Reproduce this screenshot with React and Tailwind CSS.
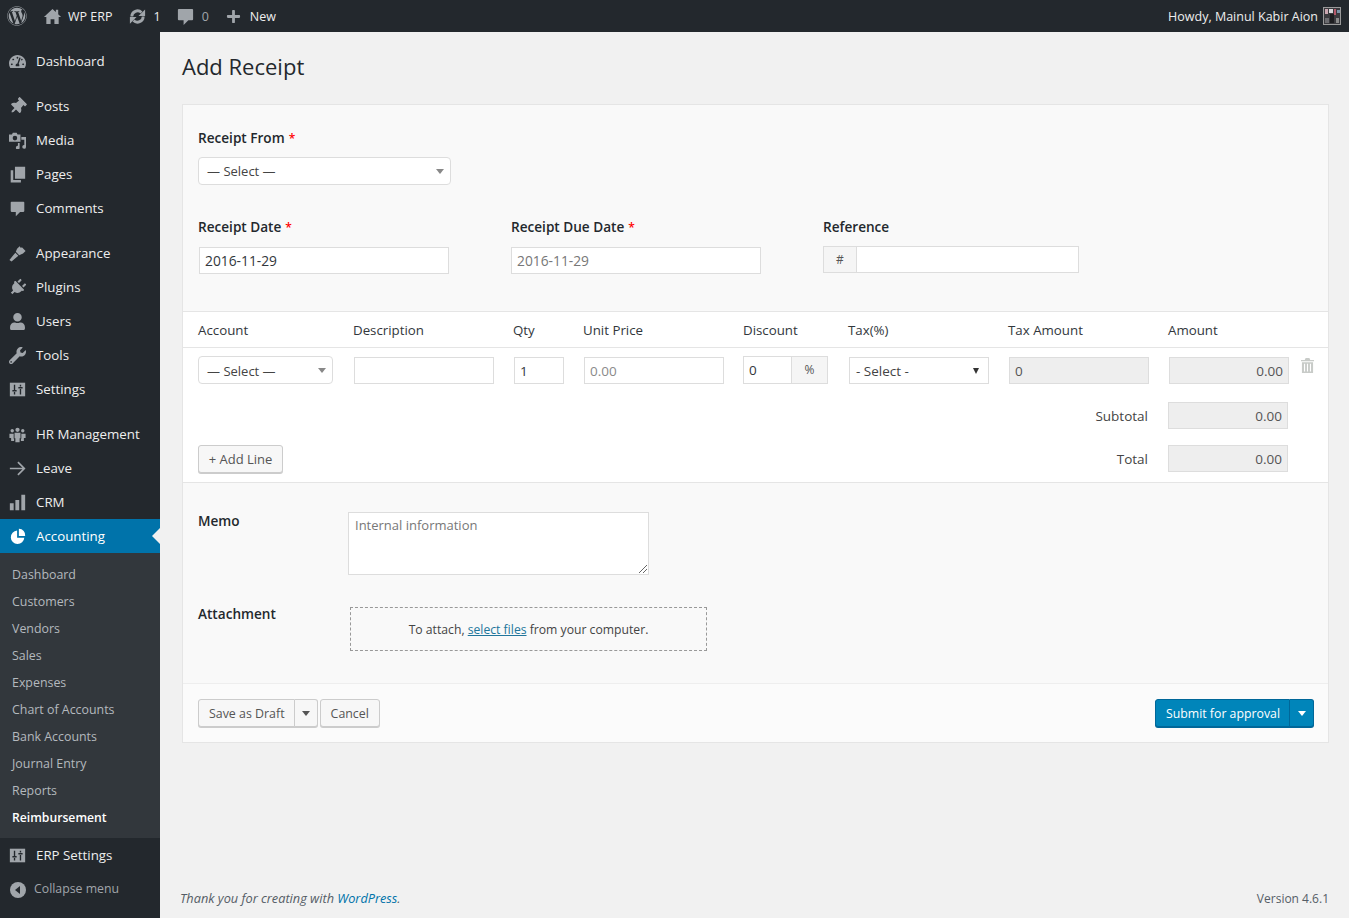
import { FaWordpress, FaPlus, FaThumbtack, FaUser, FaWrench, FaPlug, FaTachometerAlt } from 'react-icons/fa'

function Bubble({ className }) {
  return (
    <svg viewBox="0 0 20 20" className={className} fill="currentColor">
      <path d="M3 2h14c.6 0 1 .4 1 1v10c0 .6-.4 1-1 1h-4l-5 5v-5H3c-.6 0-1-.4-1-1V3c0-.6.4-1 1-1z" />
    </svg>
  )
}

function Home({ className }) {
  return (
    <svg viewBox="0 0 20 20" className={className} fill="currentColor">
      <path d="M10 2L1 10.500h2.500V18H8v-5h4v5h4.500v-7.500H19l-3-3V3h-2.500v2.200z" />
    </svg>
  )
}

function Update({ className }) {
  return (
    <svg viewBox="0 0 20 20" className={className}>
      <path d="M4 10a6 6 0 0 1 10.200-4.200M16 10a6 6 0 0 1-10.200 4.200" fill="none" stroke="currentColor" strokeWidth="3" />
      <path d="M18 2.500v7h-7zM2 17.500v-7h7z" fill="currentColor" />
    </svg>
  )
}

function Pin({ className }) {
  return <FaThumbtack className={className + ' rotate-45'} />
}

function Plug({ className }) {
  return <FaPlug className={className + ' rotate-45'} />
}

function Brush({ className }) {
  return (
    <svg viewBox="0 0 20 20" className={className} fill="currentColor">
      <path d="M0.500 17.500l7-8.500 3.500 3.500L3 19.500zM8 8L9.500 4.500 12.500 1.500 14 3.500l1.200-.8L19.500 7 16.500 10 12 12z" />
    </svg>
  )
}

function Media({ className }) {
  return (
    <svg viewBox="0 0 20 20" className={className} fill="currentColor">
      <path d="M0 3h3.500l1-2h4.500l1 2h3.500v8.500H0V3zm7 1.500a2.700 2.700 0 100 5.400 2.700 2.700 0 000-5.400z" fillRule="evenodd" />
      <path d="M20 6v11.500a2.200 2.200 0 11-2-2.200V9h-3.500V6h5.500zM12.500 13v5.500a2.200 2.200 0 11-2-2.200V13h2z" />
    </svg>
  )
}

function Pages({ className }) {
  return (
    <svg viewBox="0 0 20 20" className={className} fill="currentColor">
      <path d="M7 1h12v14H7zM2 5h3v11.500h9V19.500H2z" />
    </svg>
  )
}

function Sliders({ className }) {
  return (
    <svg viewBox="0 0 20 20" className={className}>
      <path fill="currentColor" d="M1 2h18v16H1z" />
      <path stroke="#23282d" strokeWidth="1.600" fill="none" d="M6.500 4.500v6M6.500 13v3M13.500 4.500v2M13.500 9.500v6.500M4 11.500h5M11 8h5" />
    </svg>
  )
}

function Groups({ className }) {
  return (
    <svg viewBox="0 0 20 20" className={className} fill="currentColor">
      <circle cx="10" cy="4.500" r="2.500" />
      <path d="M6.500 8h7v6.500h-1V19h-5v-4.500h-1z" />
      <circle cx="3.800" cy="5.500" r="2" />
      <circle cx="16.200" cy="5.500" r="2" />
      <path d="M0.500 9h5v6H6v2.500H2.500V14H0.500zM19.500 9h-5v6H14v2.500h3.500V14h2z" />
    </svg>
  )
}

function Arrow({ className }) {
  return (
    <svg viewBox="0 0 20 20" className={className} fill="none" stroke="currentColor" strokeWidth="2">
      <path d="M1 10h17M10.500 2.500L18 10l-7.500 7.500" />
    </svg>
  )
}

function Bars({ className }) {
  return (
    <svg viewBox="0 0 20 20" className={className} fill="currentColor">
      <path d="M1 11h4.500v8H1zM7.500 7H12v12H7.500zM14.500 1H19v18h-4.500z" />
    </svg>
  )
}

function Pie({ className }) {
  return (
    <svg viewBox="0 0 20 20" className={className} fill="currentColor">
      <path d="M9 4a7.500 7.500 0 1 0 8 8H9z" />
      <path d="M11 2a7 7 0 0 1 7 8h-7z" />
    </svg>
  )
}

function Trash({ className }) {
  return (
    <svg viewBox="0 0 14 16" className={className} fill="currentColor">
      <path d="M5 0h4l1 2h4v1.500H0V2h4L5 0z" />
      <path d="M1 4.500h12V16H1V4.500zm2.200 1.500v8.500h1.200V6H3.200zm3.200 0v8.500h1.200V6H6.400zm3.200 0v8.500h1.200V6H9.600z" fillRule="evenodd" />
    </svg>
  )
}

function Caret({ className }) {
  return <span className={'block h-0 w-0 border-x-4 border-t-[5px] border-x-transparent ' + className} />
}

const menuGroups = [
  [['Dashboard', FaTachometerAlt]],
  [['Posts', Pin], ['Media', Media], ['Pages', Pages], ['Comments', Bubble]],
  [['Appearance', Brush], ['Plugins', Plug], ['Users', FaUser], ['Tools', FaWrench], ['Settings', Sliders]],
  [['HR Management', Groups], ['Leave', Arrow], ['CRM', Bars]],
]

const subMenu = ['Dashboard', 'Customers', 'Vendors', 'Sales', 'Expenses', 'Chart of Accounts', 'Bank Accounts', 'Journal Entry', 'Reports']

function MenuItem({ label, Icon }) {
  return (
    <div className="flex h-[34px] items-center text-[13.300px] text-[#eeeeee]">
      <span className="flex w-9 shrink-0 justify-center pr-[1px] text-[#a0a5aa]">
        <Icon className="h-[17px] w-[17px]" />
      </span>
      <span className="pt-[2px]">{label}</span>
    </div>
  )
}

function Sidebar() {
  return (
    <aside className="flex w-40 shrink-0 flex-col bg-[#23282d] pt-3">
      {menuGroups.map((group, i) => (
        <div key={group[0][0]} className={i < 3 ? 'mb-[11px]' : ''}>
          {group.map(([label, Icon]) => (
            <MenuItem key={label} label={label} Icon={Icon} />
          ))}
        </div>
      ))}
      <div className="relative flex h-[34px] items-center bg-[#0073aa] text-[13.300px] text-white">
        <span className="flex w-9 shrink-0 justify-center pr-[1px]">
          <Pie className="h-[18px] w-[18px]" />
        </span>
        <span className="pt-[2px]">Accounting</span>
        <span className="absolute right-0 top-[9px] h-0 w-0 border-y-8 border-r-8 border-y-transparent border-r-[#f1f1f1]" />
      </div>
      <div className="bg-[#32373c] pb-[6px] pt-[9px] text-[12.400px] text-[#b4b9be]">
        {subMenu.map((s) => (
          <div key={s} className="flex h-[27px] items-center pl-3">{s}</div>
        ))}
        <div className="flex h-[27px] items-center pl-3 text-[12.200px] font-semibold text-white">Reimbursement</div>
      </div>
      <MenuItem label="ERP Settings" Icon={Sliders} />
      <div className="flex h-[34px] items-center pt-px text-[12.300px] text-[#a0a5aa]">
        <span className="ml-[10px] mr-2 flex h-4 w-4 items-center justify-center rounded-full bg-[#a0a5aa]">
          <span className="mr-[2px] h-0 w-0 border-y-[4px] border-r-[5px] border-y-transparent border-r-[#23282d]" />
        </span>
        Collapse menu
      </div>
    </aside>
  )
}

function TopBar() {
  return (
    <header className="flex h-8 shrink-0 items-center bg-[#23282d] text-[12.500px] text-[#eeeeee]">
      <FaWordpress className="ml-[7px] h-[20px] w-[20px] text-[#a0a5aa]" />
      <Home className="ml-[16px] h-[19px] w-[19px] text-[#a0a5aa]" />
      <span className="ml-[6px] mt-[2px]">WP ERP</span>
      <Update className="ml-[15px] h-[19px] w-[19px] text-[#a0a5aa]" />
      <span className="ml-[7px] mt-[2px]">1</span>
      <Bubble className="ml-[15px] h-[19px] w-[19px] text-[#a0a5aa]" />
      <span className="ml-[7px] mt-[2px] text-[#a0a5aa]">0</span>
      <FaPlus className="ml-[17px] h-[15px] w-[15px] text-[#a0a5aa]" />
      <span className="ml-[9px] mt-[2px]">New</span>
      <span className="ml-auto mt-[2px]">Howdy, Mainul Kabir Aion</span>
      <svg viewBox="0 0 18 18" className="ml-[5px] mr-[8px] h-[18px] w-[18px] shrink-0">
        <rect width="18" height="18" fill="#9a9a9a" />
        <rect x="1" y="1" width="16" height="16" fill="#3a3a3e" />
        <rect x="2" y="2" width="3" height="5" fill="#c9a6b0" />
        <rect x="6" y="2" width="4" height="4" fill="#d8d8dc" />
        <rect x="11" y="2" width="2" height="6" fill="#b5586a" />
        <rect x="14" y="3" width="3" height="3" fill="#7a93a8" />
        <rect x="7" y="7" width="4" height="9" fill="#1d1d20" />
        <rect x="2" y="11" width="4" height="5" fill="#6c6c70" />
        <rect x="13" y="11" width="3" height="5" fill="#8a8a8a" />
      </svg>
    </header>
  )
}

const input = 'h-[27px] border border-[#dddddd] bg-white px-[5px] pt-px text-[13.500px] flex items-center'

function SelectBox({ className, textPad }) {
  return (
    <div className={'flex h-[28px] items-center justify-between rounded-[4px] border border-[#dddddd] bg-white pl-2 pr-[6px] text-[13px] text-[#444444] ' + className}>
      <span className={textPad}>— Select —</span>
      <Caret className="border-t-[#888888]" />
    </div>
  )
}

function Label({ children, required }) {
  return (
    <div className="text-[13.600px] font-semibold leading-5 text-[#23282d]">
      {children}
      {required && <span className="ml-1 text-[12px] text-[#ff0000]">*</span>}
    </div>
  )
}

function ReadOnly({ value, className }) {
  return (
    <div className={'h-[27px] border border-[#dddddd] bg-[#eeeeee] px-[5px] pt-px text-[13.500px] leading-[25px] text-[#555555] ' + className}>
      {value}
    </div>
  )
}

function LineTable() {
  return (
    <section className="border-y border-[#e5e5e5] bg-white pl-[15px]">
      <div className="-ml-[15px] border-b border-[#e5e5e5] pl-[15px]">
        <div className="grid h-[35px] grid-cols-[155px_160px_70px_160px_105px_160px_160px_1fr] items-center pt-[2px] text-[13.300px] text-[#32373c]">
          <span>Account</span>
          <span>Description</span>
          <span>Qty</span>
          <span>Unit Price</span>
          <span>Discount</span>
          <span>Tax(%)</span>
          <span>Tax Amount</span>
          <span>Amount</span>
        </div>
      </div>
      <div className="grid grid-cols-[155px_160px_70px_160px_105px_160px_160px_1fr] pt-[8px]">
        <SelectBox className="w-[135px]" textPad="pt-[4px]" />
        <div className={input + ' ml-px mt-px w-[140px]'} />
        <div className={input + ' ml-px mt-px w-[50px] text-[#32373c]'}>1</div>
        <div className={input + ' ml-px mt-px w-[140px] text-[#8a8a8a]'}>0.00</div>
        <div className="flex h-[28px] w-[85px] border border-[#dddddd] text-[13.500px]">
          <span className="flex flex-1 items-center bg-white pl-[5px] text-[#32373c]">0</span>
          <span className="flex w-[36px] items-center justify-center border-l border-[#dddddd] bg-[#f5f5f5] text-[12px] text-[#555555]">%</span>
        </div>
        <div className={input + ' ml-px mt-px w-[140px] justify-between pl-[6px] pr-[9px] text-[#444444]'}>
          <span className="pt-px">- Select -</span>
          <span className="block h-0 w-0 border-x-[3.500px] border-t-[6px] border-x-transparent border-t-[#333333]" />
        </div>
        <ReadOnly value="0" className="ml-px mt-px w-[140px]" />
        <div className="ml-px mt-px flex items-start">
          <ReadOnly value="0.00" className="w-[120px] text-right" />
          <Trash className="ml-3 mt-[1px] h-[15px] w-[13px] text-[#c8cbc8]" />
        </div>
      </div>
      <div className="mt-[18px] flex h-[27px] items-center">
        <span className="ml-auto mr-5 pt-px text-[13.500px] text-[#444444]">Subtotal</span>
        <ReadOnly value="0.00" className="mr-[40px] w-[120px] text-right" />
      </div>
      <div className="mb-[9px] mt-[16px] flex h-[28px] items-start">
        <button className="h-[28px] w-[85px] rounded-[3px] border border-[#cccccc] bg-[#f7f7f7] pt-px text-[13px] text-[#555555] shadow-[0_1px_0_#cccccc]">
          + Add Line
        </button>
        <span className="ml-auto mr-5 pt-[4px] text-[13.500px] text-[#444444]">Total</span>
        <ReadOnly value="0.00" className="mr-[40px] w-[120px] text-right" />
      </div>
    </section>
  )
}

function App() {
  return (
    <div className="flex h-[918px] flex-col overflow-hidden bg-[#f1f1f1] font-['Open_Sans',sans-serif]">
      <TopBar />
      <div className="flex min-h-0 flex-1">
        <Sidebar />
        <main className="flex min-w-0 flex-1 flex-col pl-[22px] pr-5">
          <h1 className="mb-[22px] mt-[18px] text-[22px] font-normal leading-[32px] text-[#23282d]">Add Receipt</h1>
          <div className="border border-[#e5e5e5] bg-[#f9f9f9]">
            <div className="pl-[15px] pt-[23px]">
              <Label required>Receipt From</Label>
              <SelectBox className="mt-[8px] w-[253px]" textPad="pt-[2px]" />
              <div className="mt-[32px] flex pb-[37px]">
                <div className="w-[312px]">
                  <Label required>Receipt Date</Label>
                  <div className={input + ' ml-px mt-[9px] w-[250px] !text-[13.800px] text-[#32373c]'}>2016-11-29</div>
                </div>
                <div className="w-[312px] pl-px">
                  <Label required>Receipt Due Date</Label>
                  <div className={input + ' mt-[9px] w-[250px] !text-[13.800px] text-[#777777]'}>2016-11-29</div>
                </div>
                <div className="pl-px">
                  <Label>Reference</Label>
                  <div className="mt-[9px] flex h-[27px] w-[256px] border border-[#dddddd]">
                    <span className="flex w-[33px] items-center justify-center border-r border-[#dddddd] bg-[#f5f5f5] text-[12px] text-[#555555]">#</span>
                    <span className="flex-1 bg-white" />
                  </div>
                </div>
              </div>
            </div>
            <LineTable />
            <div className="flex pl-[15px] pt-[29px]">
              <div className="-mt-[1px] w-[150px]">
                <Label>Memo</Label>
              </div>
              <div className="relative h-[63px] w-[301px] border border-[#dddddd] bg-white px-[6px] pt-[3px] text-[13px] text-[#777777]">
                Internal information
                <svg viewBox="0 0 10 10" className="absolute bottom-0 right-0 h-[10px] w-[10px]" stroke="#666666" fill="none">
                  <path d="M1 9l8-8M5 9l4-4" />
                </svg>
              </div>
            </div>
            <div className="mt-[32px] flex pl-[15px]">
              <div className="-mt-[3px] w-[152px]">
                <Label>Attachment</Label>
              </div>
              <div className="flex h-[44px] w-[357px] items-center justify-center border border-dashed border-[#999999] pt-[2px] text-[12.200px] text-[#444444]">
                <span>
                  To attach, <a className="text-[#21759b] underline">select files</a> from your computer.
                </span>
              </div>
            </div>
            <footer className="mt-[32px] flex items-center justify-between border-t border-[#eeeeee] bg-[#fbfbfb] pb-[15px] pl-[15px] pr-[14px] pt-[15px]">
              <div className="flex text-[12.400px] text-[#555555]">
                <span className="flex h-[28px] items-center rounded-l-[3px] border border-[#cccccc] bg-[#f7f7f7] pl-[10px] pr-[9px] pt-[2px] shadow-[0_1px_0_#cccccc]">Save as Draft</span>
                <span className="flex h-[28px] w-[23px] items-center justify-center rounded-r-[3px] border border-l-0 border-[#cccccc] bg-[#f7f7f7] pl-px shadow-[0_1px_0_#cccccc]">
                  <Caret className="border-t-[#555555]" />
                </span>
                <span className="ml-[2px] flex h-[28px] items-center rounded-[3px] border border-[#cccccc] bg-[#f7f7f7] px-[10px] pt-[2px] shadow-[0_1px_0_#cccccc]">Cancel</span>
              </div>
              <div className="flex text-[12.300px] text-white">
                <span className="flex h-[28px] items-center rounded-l-[3px] border border-[#006799] bg-[#0085ba] pl-[10px] pr-[9px] pt-[2px] shadow-[0_1px_0_#006799]">Submit for approval</span>
                <span className="flex h-[28px] w-[24px] items-center justify-center rounded-r-[3px] border border-l-0 border-[#006799] bg-[#0085ba] pl-px shadow-[0_1px_0_#006799]">
                  <Caret className="border-t-white" />
                </span>
              </div>
            </footer>
          </div>
          <div className="mt-auto flex items-baseline justify-between pb-[10px] text-[12px]">
            <span className="-ml-[2px] text-[12.750px] italic text-[#555d66]">
              Thank you for creating with <a className="text-[#0073aa]">WordPress</a>.
            </span>
            <span className="text-[#555d66]">Version 4.6.1</span>
          </div>
        </main>
      </div>
    </div>
  )
}

export default App
